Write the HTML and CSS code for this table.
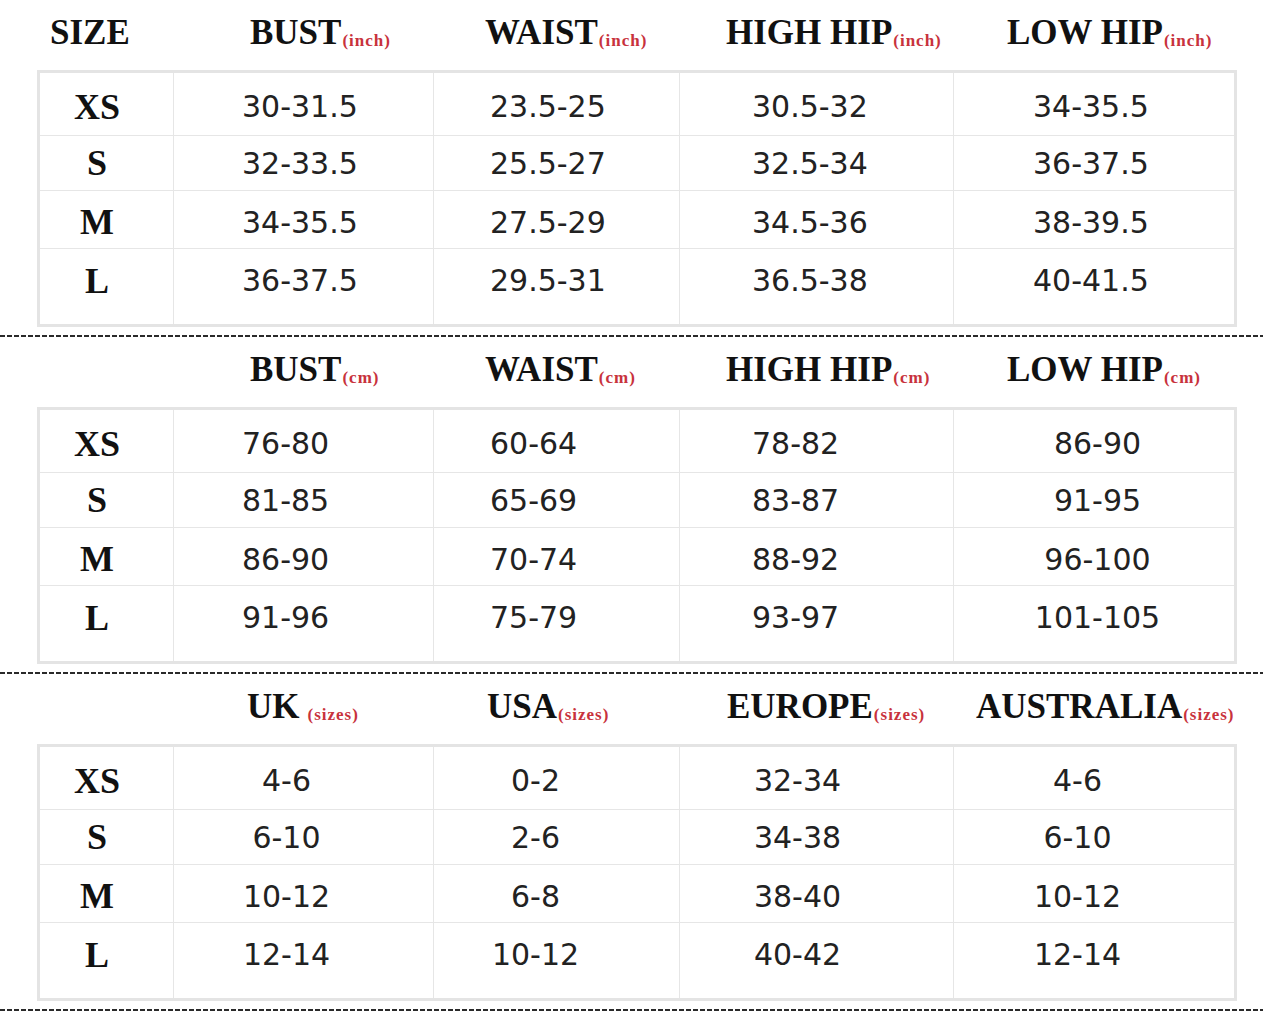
FILE: index.html
```html
<!DOCTYPE html>
<html lang="en">
<head>
<meta charset="utf-8">
<title>Size Chart</title>
<link rel="stylesheet" href="styles.css">
</head>
<body>
<main class="chart">
  <section class="block b1">
    <div class="head">
      <div class="h">SIZE</div>
      <div class="h">BUST<span class="unit">(inch)</span></div>
      <div class="h">WAIST<span class="unit">(inch)</span></div>
      <div class="h">HIGH HIP<span class="unit">(inch)</span></div>
      <div class="h">LOW HIP<span class="unit">(inch)</span></div>
    </div>
    <div class="table">
      <div class="c lbl">XS</div><div class="c">30-31.5</div><div class="c">23.5-25</div><div class="c">30.5-32</div><div class="c">34-35.5</div>
      <div class="c lbl">S</div><div class="c">32-33.5</div><div class="c">25.5-27</div><div class="c">32.5-34</div><div class="c">36-37.5</div>
      <div class="c lbl">M</div><div class="c">34-35.5</div><div class="c">27.5-29</div><div class="c">34.5-36</div><div class="c">38-39.5</div>
      <div class="c lbl">L</div><div class="c">36-37.5</div><div class="c">29.5-31</div><div class="c">36.5-38</div><div class="c">40-41.5</div>
    </div>
    <div class="dash"></div>
  </section>

  <section class="block b2">
    <div class="head">
      <div class="h"></div>
      <div class="h">BUST<span class="unit">(cm)</span></div>
      <div class="h">WAIST<span class="unit">(cm)</span></div>
      <div class="h">HIGH HIP<span class="unit">(cm)</span></div>
      <div class="h">LOW HIP<span class="unit">(cm)</span></div>
    </div>
    <div class="table">
      <div class="c lbl">XS</div><div class="c">76-80</div><div class="c">60-64</div><div class="c">78-82</div><div class="c">86-90</div>
      <div class="c lbl">S</div><div class="c">81-85</div><div class="c">65-69</div><div class="c">83-87</div><div class="c">91-95</div>
      <div class="c lbl">M</div><div class="c">86-90</div><div class="c">70-74</div><div class="c">88-92</div><div class="c">96-100</div>
      <div class="c lbl">L</div><div class="c">91-96</div><div class="c">75-79</div><div class="c">93-97</div><div class="c">101-105</div>
    </div>
    <div class="dash"></div>
  </section>

  <section class="block b3">
    <div class="head">
      <div class="h"></div>
      <div class="h">UK<span class="unit wide">(sizes)</span></div>
      <div class="h">USA<span class="unit">(sizes)</span></div>
      <div class="h">EUROPE<span class="unit">(sizes)</span></div>
      <div class="h">AUSTRALIA<span class="unit">(sizes)</span></div>
    </div>
    <div class="table">
      <div class="c lbl">XS</div><div class="c">4-6</div><div class="c">0-2</div><div class="c">32-34</div><div class="c">4-6</div>
      <div class="c lbl">S</div><div class="c">6-10</div><div class="c">2-6</div><div class="c">34-38</div><div class="c">6-10</div>
      <div class="c lbl">M</div><div class="c">10-12</div><div class="c">6-8</div><div class="c">38-40</div><div class="c">10-12</div>
      <div class="c lbl">L</div><div class="c">12-14</div><div class="c">10-12</div><div class="c">40-42</div><div class="c">12-14</div>
    </div>
    <div class="dash"></div>
  </section>
</main>
</body>
</html>
```

FILE: styles.css
```css
html, body {
  margin: 0;
  padding: 0;
  background: #ffffff;
}

.chart {
  width: 1263px;
  overflow: hidden;
}

.block {
  display: flex;
  flex-direction: column;
}

.head,
.table {
  display: grid;
  grid-template-columns: 133px 260px 246px 274px 281px;
  margin-left: 37px;
  width: 1200px;
  box-sizing: border-box;
}

.head {
  height: 70px;
  padding-left: 3px;
}

.h {
  font-family: "Liberation Serif", "Times New Roman", serif;
  font-weight: bold;
  font-size: 35px;
  line-height: 66px;
  color: #111111;
  white-space: nowrap;
}

.unit {
  font-size: 17px;
  letter-spacing: 1px;
  color: #c8323c;
  vertical-align: -2px;
  margin-left: 1px;
}

.unit.wide {
  margin-left: 8px;
}

.head .h:nth-child(1) { padding-left: 10px; }
.head .h:nth-child(2) { padding-left: 77px; }
.head .h:nth-child(3) { padding-left: 52px; }
.head .h:nth-child(4) { padding-left: 47px; }
.head .h:nth-child(5) { padding-left: 54px; }

.b3 .head .h:nth-child(2) { padding-left: 74px; }
.b3 .head .h:nth-child(3) { padding-left: 54px; }
.b3 .head .h:nth-child(4) { padding-left: 48px; }
.b3 .head .h:nth-child(5) { padding-left: 23px; }

.table {
  height: 257px;
  border: 3px solid #e4e4e4;
  grid-template-rows: 62px 55px 58px 76px;
}

.c {
  display: flex;
  align-items: center;
  justify-content: flex-start;
  box-sizing: border-box;
  font-family: "DejaVu Sans", Verdana, sans-serif;
  font-size: 30px;
  color: #222222;
  white-space: nowrap;
}

.c:nth-child(5n+2),
.c:nth-child(5n+3),
.c:nth-child(5n+4),
.c:nth-child(5n+5) {
  border-left: 1px solid #e6e6e6;
}

.c:nth-child(n+6) {
  border-top: 1px solid #e6e6e6;
}

.c:nth-child(-n+5) {
  padding-top: 5px;
}

.c:nth-child(n+11):nth-child(-n+15) {
  padding-top: 5px;
}

.c:nth-child(n+16) {
  padding-bottom: 12px;
}

.lbl {
  justify-content: center;
  padding-right: 19px;
  font-family: "Liberation Serif", "Times New Roman", serif;
  font-weight: bold;
  font-size: 36px;
  color: #111111;
}

/* table 1: left-aligned values */
.b1 .c:nth-child(5n+2) { padding-left: 68px; }
.b1 .c:nth-child(5n+3) { padding-left: 56px; }
.b1 .c:nth-child(5n+4) { padding-left: 72px; }
.b1 .c:nth-child(5n+5) { padding-left: 79px; }

/* table 2 */
.b2 .c:nth-child(5n+2) { padding-left: 68px; }
.b2 .c:nth-child(5n+3) { padding-left: 56px; }
.b2 .c:nth-child(5n+4) { padding-left: 72px; }
.b2 .c:nth-child(5n+5) { justify-content: center; padding-left: 7px; }

/* table 3: centered values */
.b3 .c:nth-child(5n+2) { justify-content: center; padding-right: 34px; }
.b3 .c:nth-child(5n+3) { justify-content: center; padding-right: 42px; }
.b3 .c:nth-child(5n+4) { justify-content: center; padding-right: 38px; }
.b3 .c:nth-child(5n+5) { justify-content: center; padding-right: 33px; }

.dash {
  height: 2px;
  margin-top: 8px;
  width: 1263px;
  background: repeating-linear-gradient(90deg, #2a2a2a 0 5px, transparent 5px 7px);
}
```
